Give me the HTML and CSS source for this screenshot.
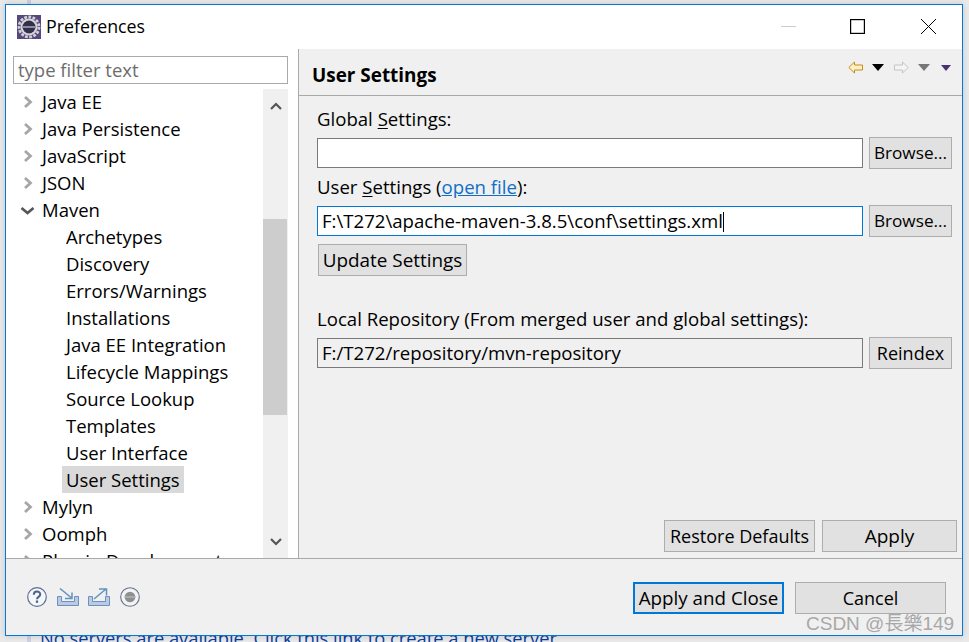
FILE: index.html
```html
<!DOCTYPE html>
<html lang="en">
<head>
<meta charset="utf-8">
<title>Preferences</title>
<link rel="stylesheet" href="styles.css">
</head>
<body>
<div class="desk-strip"></div>
<a class="desk-link">No servers are available. Click this link to create a new server.</a>
<div class="dialog">
  <header class="titlebar">
    <svg class="app-icon" width="24" height="24" viewBox="0 0 24 24">
      <rect width="24" height="24" fill="#57477f"/>
      <circle cx="12" cy="12" r="10" fill="none" stroke="#d2d2d6" stroke-width="2.8" stroke-dasharray="2.8 1.4"/>
      <circle cx="12" cy="12" r="8.500" fill="#d8d8dc"/>
      <circle cx="12" cy="12" r="6.500" fill="#33314a"/>
      <rect x="5.500" y="11" width="13" height="2" fill="#8d8aa6"/>
    </svg>
    <span class="title">Preferences</span>
    <div class="winctl">
      <svg width="15" height="15" viewBox="0 0 15 15" class="ctl-min"><path d="M0 7.500h15" stroke="#ccc" fill="none"/></svg>
      <svg width="15" height="15" viewBox="0 0 15 15" class="ctl-max"><rect x=".6" y=".6" width="13.8" height="13.8" stroke="#000" stroke-width="1.200" fill="none"/></svg>
      <svg width="15" height="15" viewBox="0 0 15 15"><path d="M0 0l15 15M15 0L0 15" stroke="#000" fill="none"/></svg>
    </div>
  </header>
  <div class="main">
    <aside class="left">
      <div class="filter">type filter text</div>
      <div class="tree-wrap">
        <ul class="tree">
          <li class="node"><svg class="chev" viewBox="0 0 12 12"><path d="M5 1l5.500 5L5 11"/></svg>Java EE</li>
          <li class="node"><svg class="chev" viewBox="0 0 12 12"><path d="M5 1l5.500 5L5 11"/></svg>Java Persistence</li>
          <li class="node"><svg class="chev" viewBox="0 0 12 12"><path d="M5 1l5.500 5L5 11"/></svg>JavaScript</li>
          <li class="node"><svg class="chev" viewBox="0 0 12 12"><path d="M5 1l5.500 5L5 11"/></svg>JSON</li>
          <li class="node"><svg class="chev open" viewBox="0 0 12 12"><path d="M1.500 4l6 5 6-5"/></svg>Maven</li>
          <li class="child"><span>Archetypes</span></li>
          <li class="child"><span>Discovery</span></li>
          <li class="child"><span>Errors/Warnings</span></li>
          <li class="child"><span>Installations</span></li>
          <li class="child"><span>Java EE Integration</span></li>
          <li class="child"><span>Lifecycle Mappings</span></li>
          <li class="child"><span>Source Lookup</span></li>
          <li class="child"><span>Templates</span></li>
          <li class="child"><span>User Interface</span></li>
          <li class="child selected"><span>User Settings</span></li>
          <li class="node"><svg class="chev" viewBox="0 0 12 12"><path d="M5 1l5.500 5L5 11"/></svg>Mylyn</li>
          <li class="node"><svg class="chev" viewBox="0 0 12 12"><path d="M5 1l5.500 5L5 11"/></svg>Oomph</li>
          <li class="node"><svg class="chev" viewBox="0 0 12 12"><path d="M5 1l5.500 5L5 11"/></svg>Plug-in Development</li>
        </ul>
        <div class="scrollbar">
          <div class="sb-btn"><svg viewBox="0 0 12 8" width="12" height="8"><path d="M1 7l5-5 5 5"/></svg></div>
          <div class="sb-track"><div class="sb-thumb"></div></div>
          <div class="sb-btn"><svg viewBox="0 0 12 8" width="12" height="8"><path d="M1 1l5 5 5-5"/></svg></div>
        </div>
      </div>
    </aside>
    <section class="right">
      <div class="page-head">
        <h1>User Settings</h1>
        <div class="nav-icons">
          <svg class="nav-back" width="15" height="13" viewBox="0 0 15 13"><path d="M.8 6.500L6.500 1v3h8v5h-8v3z" fill="#fff2c4" stroke="#c98a1e"/></svg>
          <svg class="nav-tri" width="12" height="7" viewBox="0 0 12 7"><path d="M0 0h12L6 7z" fill="#000"/></svg>
          <svg class="nav-fwd" width="15" height="13" viewBox="0 0 15 13"><path d="M14.200 6.500L8.500 1v3h-8v5h8v3z" fill="#f4f4f4" stroke="#c4c4c4"/></svg>
          <svg class="nav-tri" width="12" height="7" viewBox="0 0 12 7"><path d="M0 0h12L6 7z" fill="#777"/></svg>
          <svg class="nav-menu" width="10" height="6" viewBox="0 0 10 6"><path d="M0 0h10L5 6z" fill="#4b3275"/></svg>
        </div>
      </div>
      <div class="form">
        <label class="lbl">Global <u>S</u>ettings:</label>
        <div class="row">
          <div class="input"></div>
          <button class="btn browse">Browse...</button>
        </div>
        <label class="lbl lbl2">User <u>S</u>ettings (<a class="link">open file</a>):</label>
        <div class="row">
          <div class="input focused">F:\T272\apache-maven-3.8.5\conf\settings.xml<i class="caret"></i></div>
          <button class="btn browse">Browse...</button>
        </div>
        <button class="btn update">Update Settings</button>
        <label class="lbl lbl3">Local Repository (From merged user and global settings):</label>
        <div class="row">
          <div class="input readonly">F:/T272/repository/mvn-repository</div>
          <button class="btn reindex">Reindex</button>
        </div>
      </div>
      <div class="page-actions">
        <button class="btn restore">Restore Defaults</button>
        <button class="btn apply">Apply</button>
      </div>
    </section>
  </div>
  <footer class="footer">
    <div class="tools">
      <svg width="20" height="20" viewBox="0 0 20 20"><circle cx="10" cy="10" r="9.300" fill="#f4f6fa" stroke="#5b6f93" stroke-width="1.200"/><path d="M6.800 7.800c0-4.200 6.400-4.200 6.400-.3 0 2.500-3.200 2.300-3.200 4.700" fill="none" stroke="#4e6288" stroke-width="2"/><rect x="8.900" y="13.500" width="2.200" height="2.300" fill="#4e6288"/></svg>
      <svg width="22" height="18" viewBox="0 0 22 18"><path d="M.5 8.500h4v5h13v-5h4v9H.5z" fill="#b9cbe4" stroke="#6f8fbc"/><path d="M3 .5l11 9M8 10.500h7v-6" fill="none" stroke="#5f93bd" stroke-width="1.500"/></svg>
      <svg class="tool-export" width="22" height="18" viewBox="0 0 22 18"><path d="M.5 8.500h4v5h13v-5h4v9H.5z" fill="#b9cbe4" stroke="#6f8fbc"/><path d="M6 11L18 1M11 1h7.500v6.500" fill="none" stroke="#5f93bd" stroke-width="1.500"/></svg>
      <svg width="20" height="20" viewBox="0 0 20 20"><circle cx="10" cy="10" r="9.300" fill="#f4f4f6" stroke="#66728a" stroke-width="1.100"/><circle cx="10" cy="10" r="5.300" fill="#8f8f8f"/><path d="M4.700 10h10.600" stroke="#aaa" stroke-width="2"/></svg>
    </div>
    <div class="actions">
      <button class="btn default">Apply and Close</button>
      <button class="btn cancel">Cancel</button>
    </div>
  </footer>
  <span class="watermark">CSDN @長樂149</span>
</div>
</body>
</html>
```
FILE: styles.css
```css
* { box-sizing: border-box; }
html, body { margin: 0; padding: 0; }
body {
  width: 969px; height: 642px; overflow: hidden; position: relative;
  background: #e9e9e9;
  font-family: "Open Sans", "Noto Sans", sans-serif;
  color: #000;
}
.desk-strip { position: absolute; left: 27px; top: 0; width: 4px; height: 642px; background: #cbd0e4; }
.desk-link { position: absolute; left: 40px; top: 626px; font-size: 18.300px; color: #0a3f9e; white-space: nowrap; line-height: 24px; }
.dialog {
  position: absolute; left: 5px; top: 4px;
  width: 958px; height: 632px;
  border: 1px solid #0078d7; background: #f0f0f0;
  display: flex; flex-direction: column;
  box-shadow: 0 0 6px rgba(0,0,0,.15);
}
.titlebar { height: 44px; background: #fff; display: flex; align-items: center; padding: 0 0 1px 11px; flex: none; }
.app-icon { flex: none; }
.title { font-size: 17.800px; margin: 0 0 2px 5px; }
.winctl { margin-left: auto; display: flex; align-items: center; padding-right: 26px; }
.ctl-min { margin-right: 54px; }
.ctl-max { margin-right: 56px; }
.main { flex: 1; display: flex; min-height: 0; }
.left { width: 293px; flex: none; background: #fff; border-right: 1px solid #aaa; padding: 7px 10px 0 7px; display: flex; flex-direction: column; overflow: hidden; }
.filter { height: 28px; border: 1px solid #a9a9a9; font-size: 18.500px; line-height: 26px; padding-left: 4px; color: #6d6d6d; flex: none; }
.tree-wrap { flex: 1; display: flex; min-height: 0; margin-top: 5px; overflow: hidden; }
.tree { list-style: none; margin: -1px 0 0; padding: 0; flex: 1; min-width: 0; }
.tree li { height: 27px; line-height: 27px; font-size: 18.500px; white-space: nowrap; }
.node { display: flex; align-items: center; padding-left: 7px; }
.chev { width: 12px; height: 12px; margin-right: 10px; flex: none; fill: none; stroke: #a6a6a6; stroke-width: 2.800; overflow: visible; }
.chev.open { stroke: #555; stroke-width: 2.600; }
.child { padding-left: 49px; }
.child span { display: inline-block; padding: 0 4px; height: 27px; }
.child.selected span { background: #d9d9d9; }
.scrollbar { width: 25px; flex: none; display: flex; flex-direction: column; background: #f0f0f0; height: 469px; }
.sb-btn { height: 33px; display: flex; align-items: center; justify-content: center; flex: none; }
.sb-btn svg { fill: none; stroke: #555; stroke-width: 2.200; }
.sb-track { flex: 1; padding-top: 97px; }
.sb-thumb { height: 196px; background: #cdcdcd; margin-right: 1px; }
.right { flex: 1; min-width: 0; display: flex; flex-direction: column; }
.page-head { height: 47px; border-bottom: 1px solid #a9a9a9; display: flex; align-items: flex-start; padding: 11px 11px 0 13px; flex: none; }
.page-head h1 { font-size: 18.900px; font-weight: 700; margin: 2px 0 0; line-height: 26px; }
.nav-icons { margin-left: auto; display: flex; align-items: center; height: 13px; margin-top: 1px; }
.nav-tri { margin-left: 9px; }
.nav-fwd { margin-left: 10px; }
.nav-menu { margin-left: 11px; }
.form { padding: 10px 10px 0 18px; display: flex; flex-direction: column; flex: 1; min-height: 0; }
.lbl { font-size: 18.600px; line-height: 25px; height: 27px; }
.lbl u { text-underline-offset: 2px; }
.lbl2 { margin-top: 5px; }
.lbl3 { margin-top: 30px; }
.link { color: #0f6fc6; text-decoration: underline; }
.row { display: flex; gap: 6px; margin-top: 5px; }
.input { flex: 1; height: 30px; background: #fff; border: 1px solid #7a7a7a; font-size: 18.600px; line-height: 28px; padding-left: 4px; white-space: nowrap; overflow: hidden; }
.input.focused { border-color: #0078d7; }
.input.readonly { background: #f0f0f0; }
.caret { display: inline-block; width: 1px; height: 20px; background: #000; vertical-align: -4px; }
.btn { font: inherit; font-size: 18px; line-height: 26px; padding: 0; background: #e1e1e1; border: 1px solid #adadad; color: #000; white-space: nowrap; }
.browse { width: 83px; height: 32px; margin-top: -1px; font-size: 17.200px; }
.reindex { width: 83px; height: 32px; margin-top: -1px; }
.update { width: 149px; height: 32px; margin-top: 7px; align-self: flex-start; margin-left: 1px; font-size: 18.900px; }
.page-actions { display: flex; justify-content: flex-end; gap: 7px; padding-right: 5px; padding-bottom: 6px; flex: none; }
.restore { width: 151px; height: 32px; }
.apply { width: 135px; height: 32px; font-size: 19px; }
.footer { height: 77px; flex: none; border-top: 1px solid #a9a9a9; display: flex; justify-content: space-between; padding: 23px 16px 0 21px; }
.tools { display: flex; gap: 10px; align-items: center; height: 30px; }
.tool-export { margin-left: -1px; }
.actions { display: flex; gap: 11px; }
.default { width: 151px; height: 32px; border: 2px solid #0078d7; font-size: 18.800px; }
.cancel { width: 151px; height: 32px; }
.watermark { position: absolute; left: 800px; top: 607px; font-family: "Liberation Sans", "Noto Sans CJK SC", sans-serif; font-size: 19px; color: #a8a8a8; white-space: nowrap; line-height: 24px; }
```
